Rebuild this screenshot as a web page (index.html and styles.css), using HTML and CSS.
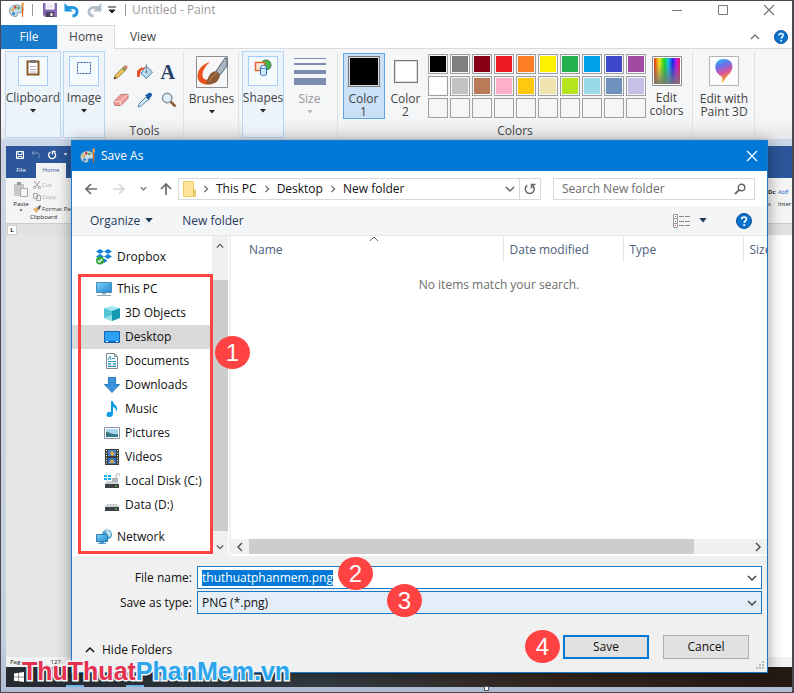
FILE: index.html
```html
<!DOCTYPE html>
<html lang="en">
<head>
<meta charset="utf-8">
<title>Untitled - Paint</title>
<link rel="stylesheet" href="styles.css">
</head>
<body>
<svg class="defs" aria-hidden="true">
  <symbol id="palette" viewBox="0 0 16 16">
    <path d="M7.5 3C3.5 3 .5 5.6.5 8.9c0 3.1 2.6 5.6 6 5.6 1.700 0 1.800-1.300 1.600-2.200-.2-1.100.6-1.800 1.700-1.600 2 .4 4.200-.3 4.200-2.500C14 5 11.200 3 7.500 3z" fill="#c3dcea" stroke="#5f8297" stroke-width=".8"/>
    <circle cx="3.700" cy="8" r="1.400" fill="#e9a02c"/><circle cx="6.200" cy="5.400" r="1.300" fill="#d83b2c"/><circle cx="9.400" cy="6" r="1.300" fill="#4ba436"/><circle cx="4.600" cy="11.400" r="1.500" fill="#3b80cf"/>
    <path d="M12.200 1.200 14.500.3l.5 3-1 1.700h-1z" fill="#f0a24a"/><path d="M12.600 5h1.800l-.3 10h-1z" fill="#e06a1b"/>
  </symbol>
  <symbol id="down" viewBox="0 0 8 4"><path d="M1 0h6L4 3.500z" fill="currentColor"/></symbol>
  <symbol id="chev-down" viewBox="0 0 10 10"><path d="M1 3l4 4 4-4" fill="none" stroke="currentColor" stroke-width="1.500"/></symbol>
  <symbol id="chev-up" viewBox="0 0 10 10"><path d="M1 7l4-4 4 4" fill="none" stroke="currentColor" stroke-width="1.500"/></symbol>
  <symbol id="chev-right" viewBox="0 0 10 10"><path d="M3 1l4 4-4 4" fill="none" stroke="currentColor" stroke-width="1.500"/></symbol>
  <symbol id="chev-left" viewBox="0 0 10 10"><path d="M7 1L3 5l4 4" fill="none" stroke="currentColor" stroke-width="1.500"/></symbol>
  <symbol id="close" viewBox="0 0 12 12"><path d="M1 1l10 10M11 1L1 11" fill="none" stroke="currentColor" stroke-width="1.200"/></symbol>
  <symbol id="floppy" viewBox="0 0 16 16">
    <path d="M1 1h14v14H3l-2-2z" fill="#8468b4"/><path d="M3.500 1h9v6.500h-9z" fill="#fff"/><path d="M5 3h6M5 5h6" stroke="#d9d2e8"/><path d="M4 10h8v5H4z" fill="#4b4160"/><path d="M8.500 11h2v3h-2z" fill="#fff"/>
  </symbol>
  <symbol id="undo" viewBox="0 0 16 16"><path d="M2 5.500h6.500c6 0 6 8 0 8.500" fill="none" stroke="currentColor" stroke-width="3"/><path d="M.5 1v8.500H9z" fill="currentColor"/></symbol>
  <symbol id="drive" viewBox="0 0 16 16"><path d="M3 7h10l2 3H1z" fill="#cfd2d4"/><path d="M1 10h14v4H1z" fill="#3e4143"/><path d="M11 11.500h2v1h-2z" fill="#57e04b"/></symbol>
  <symbol id="help" viewBox="0 0 16 16"><circle cx="8" cy="8" r="7.500" fill="#0a72cd" stroke="#0a4f93"/><path d="M5.700 6.300c0-3 4.800-3 4.800-.2C10.500 8 8.200 7.800 8.200 10" fill="none" stroke="#fff" stroke-width="1.700"/><path d="M7.300 11.300h1.800V13H7.300z" fill="#fff"/></symbol>
  <linearGradient id="sky" x1="0" y1="0" x2="1" y2="1"><stop offset="0" stop-color="#7ed3f7"/><stop offset="1" stop-color="#1f86d0"/></linearGradient>
  <linearGradient id="hue"><stop offset="0" stop-color="#e42a1a"/><stop offset=".2" stop-color="#f4e51c"/><stop offset=".4" stop-color="#16d32b"/><stop offset=".55" stop-color="#15bfe8"/><stop offset=".72" stop-color="#2026e8"/><stop offset=".87" stop-color="#c71ae0"/><stop offset="1" stop-color="#e8184a"/></linearGradient>
  <linearGradient id="fade" x1="0" y1="0" x2="0" y2="1"><stop offset=".2" stop-color="#777" stop-opacity="0"/><stop offset="1" stop-color="#777" stop-opacity=".9"/></linearGradient>
  <linearGradient id="pin" x1="0" y1="0" x2=".3" y2="1"><stop offset="0" stop-color="#1dc8ee"/><stop offset=".35" stop-color="#6a72ee"/><stop offset=".65" stop-color="#d8519c"/><stop offset="1" stop-color="#ffb01f"/></linearGradient>
</svg>

<div class="paint">
  <header class="titlebar">
    <svg class="i16"><use href="#palette"/></svg><span class="bar"></span>
    <button aria-label="Save drawing"><svg class="i16"><use href="#floppy"/></svg></button>
    <button class="undo" aria-label="Undo"><svg class="i16"><use href="#undo"/></svg></button>
    <button class="redo" aria-label="Redo"><svg class="i16"><use href="#undo"/></svg></button>
    <button class="more" aria-label="Customize toolbar"><svg width="8" height="8" viewBox="0 0 8 8"><path d="M0 1h8M1 4h6L4 7z" fill="#222" stroke="#222" stroke-width="1"/></svg></button>
    <span class="bar"></span><span class="caption">Untitled - Paint</span>
    <span class="grow"></span>
    <div class="winbtns">
      <button aria-label="Minimize"><svg width="12" height="12"><path d="M1 6.500h10" stroke="#777"/></svg></button>
      <button aria-label="Maximize"><svg width="12" height="12"><path d="M1.500 1.500h9v9h-9z" fill="none" stroke="#777"/></svg></button>
      <button aria-label="Close Paint"><svg width="12" height="12"><use href="#close"/></svg></button>
    </div>
  </header>
  <nav class="tabs">
    <button class="tab file">File</button><button class="tab home">Home</button><button class="tab">View</button>
    <span class="grow"></span>
    <button aria-label="Collapse ribbon"><svg class="i10"><use href="#chev-up"/></svg></button>
    <button aria-label="Paint help"><svg width="14" height="14"><use href="#help"/></svg></button>
  </nav>

  <section class="ribbon">
    <button class="group boxed clip">
      <span class="pic"><svg width="20" height="20" viewBox="0 0 20 20"><path d="M4.500 3.500h11v13h-11z" fill="#fff" stroke="#8b5a2b" stroke-width="2"/><path d="M7 2h6v3H7z" fill="#777"/><path d="M7 8.500h6M7 11.500h6M7 14h6" stroke="#aab"/></svg></span>
      <span>Clipboard</span><svg class="arrow"><use href="#down"/></svg>
    </button>
    <button class="group boxed image">
      <span class="pic"><svg width="20" height="20" viewBox="0 0 20 20"><path d="M3.500 4.500h13v11h-13z" fill="#f2f9ff" stroke="#245b94" stroke-dasharray="2 1"/></svg></span>
      <span>Image</span><svg class="arrow"><use href="#down"/></svg>
    </button>
    <div class="group tools">
      <div class="toolgrid">
        <button aria-label="Pencil"><svg class="i16" viewBox="0 0 16 16"><path d="M1 15l1.500-4L11 2.500l2.500 2.500L5 13.500z" fill="#f2c45a" stroke="#7e6031" stroke-width=".8"/><path d="M10.500 3l1.600-1.600c1-.8 3.200 1.200 2.300 2.300L13 5.200z" fill="#d67a72"/><path d="M9.700 3.800l2.500 2.500" stroke="#4c8c44" stroke-width="1.300"/><path d="M1 15l.8-2.200 1.500 1.400z" fill="#222"/></svg></button>
        <button aria-label="Fill"><svg class="i16" viewBox="0 0 16 16"><path d="M9 2l6.500 6-6 6.500-5.500-5z" fill="#b9def2" stroke="#4c7da3"/><path d="M9.500 0v8" stroke="#89a" /><circle cx="9.500" cy="8" r="1" fill="#567"/><path d="M0 13V7l4-3.500 5 .5-5 2.500L2.500 13z" fill="#e5502c"/></svg></button>
        <button aria-label="Text" class="letter">A</button>
        <button aria-label="Eraser"><svg class="i16" viewBox="0 0 16 16"><path d="M.8 9.500L8 2.500l7-.2v4L8 13.500H2z" fill="#ef9d9a" stroke="#b55f60" stroke-width=".8"/><path d="M.8 9.500h6.200l8-7M7 9.500l.8 4" stroke="#fadada" fill="none"/></svg></button>
        <button aria-label="Pick color"><svg class="i16" viewBox="0 0 16 16"><path d="M9 5l2.500 2.500L4 14l-3 1 1-3z" fill="#d5edf8" stroke="#4a7497" stroke-width=".9"/><path d="M8 3l1.500-.5L12 .8c2-.8 4 1.400 2.600 3.200L12.300 7l-.2 1.800z" fill="#1d5fa4"/></svg></button>
        <button aria-label="Magnifier"><svg class="i16" viewBox="0 0 16 16"><path d="M9.500 9.500l5 5" stroke="#8a5c3b" stroke-width="2.500"/><circle cx="6.200" cy="6" r="4.700" fill="#d9f0fb" stroke="#8c9299" stroke-width="1.500"/></svg></button>
      </div>
      <span class="glabel">Tools</span>
    </div>
    <button class="group brushes">
      <svg width="32" height="32" viewBox="0 0 32 32"><path d="M.5.5h31v31H.5z" fill="#f7f7f7" stroke="#8e8e8e"/><path d="M14 6C6 8 1.500 14 1.500 20c0 7 7 10 15 8l-2-5c-6 2-8-1-8-4 0-5 4-10 7.500-13z" fill="#ea5320"/><path d="M10 28c2-7 4-13 11-13l3 4c-1 7-6 10-14 9z" fill="#8b5a32"/><path d="M13 26c2-4 4-7 8-9" stroke="#c08a52" fill="none"/><path d="M20 15L29 2h2v8l-7 9z" fill="#a9b6c2" stroke="#536573"/></svg>
      <span>Brushes</span><svg class="arrow"><use href="#down"/></svg>
    </button>
    <button class="group boxed shapes">
      <span class="pic"><svg width="20" height="20" viewBox="0 0 20 20"><circle cx="13" cy="7" r="5" fill="#49b34a" stroke="#2c7c34"/><path d="M2.500 4.500h9v8h-9z" fill="#fde9dc" stroke="#e3672e" stroke-width="1.500"/><path d="M7.500 9v7c0 2 6 2 6 0V9" fill="#cfe7fb" stroke="#2a72bd"/><ellipse cx="10.500" cy="9" rx="3" ry="1.500" fill="#fff" stroke="#2a72bd"/></svg></span>
      <span>Shapes</span><svg class="arrow"><use href="#down"/></svg>
    </button>
    <button class="group size" disabled>
      <svg width="32" height="32" viewBox="0 0 32 32"><path d="M0 2h32v1H0zM0 7h32v2H0zM0 14h32v4H0zM0 22h32v7H0z" fill="#7b8eb0"/></svg>
      <span>Size</span><svg class="arrow"><use href="#down"/></svg>
    </button>
    <div class="group colors">
      <div class="colorrow">
        <button class="cbtn active"><span class="chip black"></span><span>Color<br>1</span></button>
        <button class="cbtn second"><span class="chip white"></span><span>Color<br>2</span></button>
        <div class="swatches">
          <i class="c1"></i><i class="c2"></i><i class="c3"></i><i class="c4"></i><i class="c5"></i><i class="c6"></i><i class="c7"></i><i class="c8"></i><i class="c9"></i><i class="c10"></i>
          <i class="c11"></i><i class="c12"></i><i class="c13"></i><i class="c14"></i><i class="c15"></i><i class="c16"></i><i class="c17"></i><i class="c18"></i><i class="c19"></i><i class="c20"></i>
          <i></i><i></i><i></i><i></i><i></i><i></i><i></i><i></i><i></i><i></i>
        </div>
        <button class="cbtn edit"><svg width="30" height="30" viewBox="0 0 30 30"><path d="M.5.5h29v29H.5z" fill="#fff" stroke="#8e8e8e"/><path d="M2 2h26v26H2z" fill="url(#hue)"/><path d="M2 2h26v26H2z" fill="url(#fade)"/></svg><span>Edit<br>colors</span></button>
      </div>
      <span class="glabel">Colors</span>
    </div>
    <button class="group p3d">
      <svg width="30" height="30" viewBox="0 0 30 30"><path d="M.5.500h29v29H.5z" fill="#fdfdfd" stroke="#b5b5b5"/><path d="M15 3c11 0 10 12 4 16l-6 8c0-4 1-5-1-7-8-4-8-17 3-17z" fill="url(#pin)"/></svg>
      <span>Edit with<br>Paint 3D</span>
    </button>
  </section>

  <main class="workspace">
    <div class="word">
      <div class="whead">
        <div class="wquick"><svg class="i10" viewBox="0 0 10 10"><path d="M1.500 1.500h7v7h-7zM3 1.500v3h4v-3M3 8.500v-2h4v2" fill="none" stroke="#fff"/></svg>
          <svg class="i10 dim" viewBox="0 0 10 10"><path d="M1 3h5c4 0 3 4 1 5M3 1L1 3l2 2" fill="none" stroke="#fff"/></svg>
          <svg class="i10" viewBox="0 0 10 10"><path d="M3.500 2a3.500 3.500 0 1 0 4 .5M5.500 4.500v-3h3" fill="none" stroke="#fff" stroke-width="1.300"/></svg>
          <svg class="arrow" width="5" height="3"><use href="#down"/></svg></div>
        <div class="wtabs"><span>File</span><span class="on">Home</span></div>
      </div>
      <div class="wribbon">
        <div class="wclip">
          <span class="paste"><svg width="16" height="18" viewBox="0 0 16 18"><path d="M1 3h10v12H1z" fill="#c8c8c8"/><path d="M4 1h4v3H4z" fill="#999"/><path d="M7.500 7.500h7v8h-7z" fill="#f5f5f5" stroke="#aaa"/></svg>Paste<svg width="4" height="3"><use href="#down"/></svg></span>
          <span class="wcmds"><span><svg class="i8" viewBox="0 0 8 8"><path d="M1 0l5 6M7 0L2 6" stroke="#999"/><circle cx="1.500" cy="6.500" r="1" fill="none" stroke="#999"/><circle cx="6.500" cy="6.500" r="1" fill="none" stroke="#999"/></svg>Cut</span><span><svg class="i8" viewBox="0 0 8 8"><path d="M.5.5h4v5h-4zM3.500 2.500h4v5h-4z" fill="#eee" stroke="#aaa"/></svg>Copy</span><span class="fmt"><svg class="i8" viewBox="0 0 8 8"><path d="M0 4l3-2 3 3-3 3z" fill="#e8b46a"/><path d="M4 3l3-3 1 1-2 4z" fill="#555"/></svg>Format Pai</span></span>
        </div>
        <span class="wlabel">Clipboard</span>
        <div class="wstyles"><b>Dc</b><em>AaB</em><span>s</span><span>Inter</span></div>
      </div>
      <div class="wdoc"><span class="ruler">L</span><span class="grow"></span><span class="page"></span></div>
      <div class="wstatus"><span>Page</span><span>127-</span></div>
      <div class="taskbar"><svg width="10" height="10" viewBox="0 0 10 10"><path d="M0 1.500l4.500-.7v4H0zM5 .7L10 0v4.800H5zM0 5.300h4.500v4L0 8.700zM5 5.300h5V10l-5-.7z" fill="#fff"/></svg><i class="off"></i><i></i><i class="off"></i><i></i><svg width="12" height="12"><use href="#palette"/></svg></div>
    </div>
    <span class="handle"></span>

    <div class="dialog" role="dialog" aria-label="Save As">
      <div class="dtitle"><svg class="i16"><use href="#palette"/></svg><span>Save As</span><span class="grow"></span><button aria-label="Close"><svg width="12" height="12"><use href="#close"/></svg></button></div>
      <div class="dnav">
        <button aria-label="Back"><svg width="14" height="12" viewBox="0 0 14 12"><path d="M13 6H2M7 1L2 6l5 5" fill="none" stroke="#6b6b6b" stroke-width="1.700"/></svg></button>
        <button aria-label="Forward"><svg width="14" height="12" viewBox="0 0 14 12"><path d="M1 6h11M7 1l5 5-5 5" fill="none" stroke="#d6d6d6" stroke-width="1.500"/></svg></button>
        <button class="recent" aria-label="Recent locations"><svg width="7" height="7"><use href="#chev-down"/></svg></button>
        <button aria-label="Up"><svg width="12" height="14" viewBox="0 0 12 14"><path d="M6 13V2M1 7l5-5 5 5" fill="none" stroke="#6b6b6b" stroke-width="1.700"/></svg></button>
        <div class="address">
          <svg width="13" height="16" viewBox="0 0 13 16"><path d="M.5.500h10v15H.5z" fill="#ffe396" stroke="#edca62"/><path d="M10.500 9h2v6.500h-2z" fill="#f6d36f" stroke="#d9b24e" stroke-width=".6"/></svg>
          <svg class="i8"><use href="#chev-right"/></svg><a href="#pc">This PC</a>
          <svg class="i8"><use href="#chev-right"/></svg><a href="#desktop">Desktop</a>
          <svg class="i8"><use href="#chev-right"/></svg><a href="#folder">New folder</a>
          <span class="grow"></span><button aria-label="Previous locations"><svg class="i10"><use href="#chev-down"/></svg></button>
          <button class="refresh" aria-label="Refresh"><svg width="12" height="12" viewBox="0 0 12 12"><path d="M3.300 2.300a4.500 4.500 0 1 0 5 0M7.500 5.500v-4h4" fill="none" stroke="#666" stroke-width="1.500"/></svg></button>
        </div>
        <label class="search"><input type="text" placeholder="Search New folder" aria-label="Search New folder"><svg width="12" height="12" viewBox="0 0 12 12"><circle cx="7.500" cy="4.500" r="3.300" fill="none" stroke="#666" stroke-width="1.400"/><path d="M5 7L1 11" stroke="#666" stroke-width="1.800"/></svg></label>
      </div>
      <div class="dtools"><button>Organize <svg class="arrow big"><use href="#down"/></svg></button><button>New folder</button><span class="grow"></span>
        <button aria-label="Change view"><svg width="17" height="14" viewBox="0 0 17 14"><path d="M.5.500h4v13h-4zM.5 4.500h4M.5 9.500h4" fill="#fff" stroke="#999"/><path d="M2 2h1v1H2z" fill="#367"/><path d="M2 7h1v1H2z" fill="#36a"/><path d="M2 11h1v1H2z" fill="#c33"/><path d="M6 2.500h11M6 7.500h11M6 11.500h11" stroke="#888" stroke-dasharray="5 1"/></svg><svg class="arrow big"><use href="#down"/></svg></button>
        <button class="dhelp" aria-label="Help"><svg class="i16"><use href="#help"/></svg></button></div>
      <div class="dbody">
        <aside class="side">
          <ul class="tree">
            <li><a href="#dropbox"><svg class="i16" viewBox="0 0 16 16"><path d="M4 0l4 2.500L4 5 0 2.500zM12 0l4 2.500L12 5 8 2.500zM4 5l4 2.500L4 10 0 7.500zM12 5l4 2.500-4 2.500-4-2.500zM8 9.500l3.500 2L8 14l-3-2z" fill="#1081de"/><circle cx="4" cy="11.500" r="4" fill="#35a53b"/><path d="M2 11.500l1.500 1.600L6 10" stroke="#fff" stroke-width="1.300" fill="none"/></svg>Dropbox</a></li>
            <li class="gap"><a href="#pc"><svg class="i16" viewBox="0 0 16 16"><path d="M.5 1.500h15v10H.5z" fill="url(#sky)" stroke="#4a8db8"/><path d="M6 12h4v1.500H6z" fill="#9ab"/><path d="M1 14.500h14" stroke="#93a4ae"/></svg>This PC</a></li>
            <li class="sub"><a href="#objects"><svg class="i16" viewBox="0 0 16 16"><path d="M0 3l8-2 8 2-8 3z" fill="#a5e7ef"/><path d="M0 3l8 3v10l-8-3z" fill="#53c6d6"/><path d="M16 3L8 6v10l8-3z" fill="#1599b0"/><path d="M0 13l8-3v6z" fill="#98dfe8"/></svg>3D Objects</a></li>
            <li class="sub on"><a href="#desktop"><svg class="i16" viewBox="0 0 16 16"><path d="M.5 2.500h15v11H.5z" fill="#2aa2f4" stroke="#1263b0"/><path d="M1 12.500h14" stroke="#1060b5"/><path d="M2 12h2v1H2zM12 12h2v1h-2z" fill="#fff"/></svg>Desktop</a></li>
            <li class="sub"><a href="#documents"><svg class="i16" viewBox="0 0 16 16"><path d="M2.500.5h8l3 3v12h-11z" fill="#fff" stroke="#7b8b96"/><path d="M10.500.5v3h3" fill="none" stroke="#7b8b96"/><path d="M4 7l2-4 1 4M8 5.500h3M4 8.500h8M4 10.500h3M9 10.500h3M4 13.500h8M9 12h3M4 12h3" fill="none" stroke="#3796c7"/></svg>Documents</a></li>
            <li class="sub"><a href="#downloads"><svg class="i16" viewBox="0 0 16 16"><path d="M4.500.5h7v7h4L8 15.500.5 7.500h4z" fill="#3a91dc" stroke="#2977bb"/></svg>Downloads</a></li>
            <li class="sub"><a href="#music"><svg class="i16" viewBox="0 0 16 16"><path d="M7 0h2c0 4 5 4 4 9l-1 2c0-4-1-4-3-5v7c0 4-7 4-6.500.5C3 11 5 10.500 7 11z" fill="#129be8"/></svg>Music</a></li>
            <li class="sub"><a href="#pictures"><svg class="i16" viewBox="0 0 16 16"><path d="M.5 2.500h15v11H.5z" fill="#fff" stroke="#8b949a"/><path d="M2 4h12v8H2z" fill="#a8d4ef"/><path d="M2 7c4 0 5 3 12 2v3H2z" fill="#3d7779"/><path d="M2 11h12v1H2z" fill="#2877ae"/></svg>Pictures</a></li>
            <li class="sub"><a href="#videos"><svg class="i16" viewBox="0 0 16 16"><path d="M1 0h14v16H1z" fill="#3b3b3b"/><path d="M4 1h8v6H4z" fill="#4a83ce"/><path d="M4 9h8v6H4z" fill="#3774c6"/><path d="M6 4l2-2 3 3-3 2zM5 14l3-4 3 4z" fill="#e7ad31"/><path d="M2.500 1v15M13.500 1v15" stroke="#fff" stroke-dasharray="1 1.500"/></svg>Videos</a></li>
            <li class="sub"><a href="#c"><svg class="i16" viewBox="0 0 16 16"><use href="#drive" y="1"/><path d="M0 2h3v2H0zM4 2h3v2H4zM0 5h3v2H0zM4 5h3v2H4z" fill="#13b3f0"/><path d="M8 5h6v4H8z" fill="#aeb6bb"/><path d="M12 5V3c0-3 4-3 4 0v1" fill="none" stroke="#aaa"/></svg>Local Disk (C:)</a></li>
            <li class="sub"><a href="#d"><svg class="i16"><use href="#drive"/></svg>Data (D:)</a></li>
            <li class="gap"><a href="#network"><svg class="i16" viewBox="0 0 16 16"><circle cx="11" cy="5.500" r="5" fill="#4e9dc9"/><path d="M8 2l3 1-1 3 4 2 1-4-3-3z" fill="#c6e8f5"/><path d="M.5 5.500h11v7H.5z" fill="url(#sky)" stroke="#2e7bac"/><path d="M4 13h4v1H4zM2 14h8v1H2z" fill="#4b9bd0"/></svg>Network</a></li>
          </ul>
          <div class="vscroll"><svg class="i8"><use href="#chev-up"/></svg><span class="vthumb"></span><svg class="i8"><use href="#chev-down"/></svg></div>
          <span class="mark"></span><span class="badge b1">1</span>
        </aside>
        <div class="list">
          <table><thead><tr><th class="name">Name<svg class="i10 sort" viewBox="0 0 10 10"><path d="M1 7l4-4 4 4" fill="none" stroke="#666"/></svg></th><th class="col">Date modified</th><th class="col">Type</th><th class="last">Size</th></tr></thead>
          <tbody><tr><td colspan="4">No items match your search.</td></tr></tbody></table>
          <div class="hscroll"><svg class="i10"><use href="#chev-left"/></svg><span class="hthumb"></span><span class="grow"></span><svg class="i10"><use href="#chev-right"/></svg></div>
        </div>
      </div>
      <form class="dfoot">
        <div class="field"><label for="fname">File name:</label><div class="combo"><input id="fname" type="text" value="thuthuatphanmem.png"><span class="grow"></span><svg class="i10"><use href="#chev-down"/></svg></div><span class="badge b2">2</span></div>
        <div class="field"><label for="ftype">Save as type:</label><div class="combo type"><select id="ftype"><option>PNG (*.png)</option></select><svg class="i10"><use href="#chev-down"/></svg></div><span class="badge b3">3</span></div>
        <div class="actions"><button type="button" class="hide"><svg class="i10"><use href="#chev-up"/></svg>Hide Folders</button><span class="grow"></span>
          <span class="savewrap"><span class="badge b4">4</span><button type="button" class="btn save">Save</button></span><button type="button" class="btn">Cancel</button></div>
        <svg class="grip" width="8" height="8" viewBox="0 0 8 8"><path d="M6 0h2v2H6zM3 3h2v2H3zM6 3h2v2H6zM0 6h2v2H0zM3 6h2v2H3zM6 6h2v2H6z" fill="#bbb"/></svg>
      </form>
    </div>
    <div class="watermark"><span>ThuThuat</span><span class="cyan">PhanMem.vn</span></div>
  </main>
</div>
</body>
</html>
```
FILE: styles.css
```css
* { box-sizing: border-box; }
body { margin: 0; font: 12px/16px "Open Sans", "Noto Sans", sans-serif; color: #222; }
button, input, select { font: inherit; color: inherit; }
button { border: 0; padding: 0; background: none; display: flex; align-items: center; }
a { color: inherit; text-decoration: none; }
svg { display: block; flex: none; }
.defs { position: absolute; width: 0; height: 0; }
.grow { flex: 1; }
.i16 { width: 16px; height: 16px; }
.i10 { width: 10px; height: 10px; }
.i8 { width: 8px; height: 8px; }
.arrow { width: 8px; height: 4px; }
.arrow.big { width: 10px; height: 5px; }

.paint { min-height: 100vh; display: flex; flex-direction: column; border: 1px solid #4a484c; border-right-width: 2px; background: #fff; overflow: hidden; }
.titlebar { display: flex; align-items: center; height: 24px; padding: 0 17px 6px 8px; gap: 6px; }
.titlebar .bar { width: 1px; height: 12px; background: #999; margin: 0 3px 0 1px; }
.undo { color: #2397e0; }
.redo { color: #b4bfca; transform: scaleX(-1); }
.more { margin: 0 3px 0 0; }
.titlebar .more + .bar { margin: 0; }
.caption { color: #999; }
.winbtns { display: flex; gap: 34px; color: #777; }
.tabs { display: flex; align-items: center; gap: 14px; height: 24px; padding-right: 4px; color: #777; border-bottom: 1px solid #dadbdc; }
.tab { height: 24px; justify-content: center; width: 56px; color: #444; }
.tab.file { background: #1979ca; color: #fff; margin-right: -14px; }
.tab.home { width: 58px; background: #f5f6f7; border: 1px solid #dadbdc; border-bottom: 0; margin-right: -14px; }

.ribbon { display: flex; height: 90px; padding: 2px 0 1px 4px; background: linear-gradient(#f5f6f7 75%, #e6e7e8); color: #444; }
.group { display: flex; flex-direction: column; align-items: center; height: 87px; padding-top: 4px; border: 1px solid transparent; line-height: 13px; }
.group > svg:first-child { margin-bottom: 6px; }
.pic { display: grid; place-items: center; width: 30px; height: 30px; padding-bottom: 6px; border: 1px solid #a4cdf8; background: #f5faff; margin-bottom: 5px; }
.group > .arrow { margin-top: 5px; color: #222; }
.boxed { border-color: #b5d6f5; background: #ecf3f9; }
.clip { width: 56px; }
.image { width: 42px; margin-left: 2px; }
.tools { width: 79px; border-right-color: #dfe0e1; }
.toolgrid { display: grid; grid-template-columns: repeat(3, 16px); gap: 12px 8px; padding-top: 8px; }
.letter { font: bold 20px/16px "Liberation Serif", serif; color: #23406a; height: 16px; }
.glabel { margin-top: auto; line-height: 12px; }
.brushes { width: 55px; border-right-color: #dfe0e1; }
.brushes > svg:first-child, .size > svg:first-child { margin-bottom: 4px; }
.shapes { width: 42px; margin-left: 3px; }
.size { width: 51px; margin-right: 2px; color: #999; border-right-color: transparent; }
.group.size > .arrow { color: #bbb; }
.colors { width: 356px; padding-top: 1px; border-right-color: #dfe0e1; border-left-color: #dfe0e1; }
.colorrow { display: flex; }
.cbtn { flex-direction: column; width: 42px; height: 66px; border: 1px solid transparent; padding-top: 2px; }
.cbtn.active { background: #c9e0f7; border-color: #62a2e4; }
.chip { width: 32px; height: 32px; border: 1px solid #777; margin-bottom: 5px; box-shadow: inset 0 0 0 1px #ddd; }
.black { background: #000; }
.white { background: #fff; width: 24px; height: 24px; margin: 4px 0 9px; }
.swatches { display: grid; grid-template-columns: repeat(10, 20px); grid-auto-rows: 20px; gap: 2px; padding: 1px 0 0 1px; }
.swatches i { border: 1px solid #a0a0a0; padding: 1px; background-clip: content-box; }
.edit { width: 42px; padding-top: 2px; }
.edit svg { margin-bottom: 5px; }
.c1 { background-color: #000; } .c2 { background-color: #7f7f7f; } .c3 { background-color: #880015; } .c4 { background-color: #ed1c24; } .c5 { background-color: #ff7f27; }
.c6 { background-color: #fff200; } .c7 { background-color: #22b14c; } .c8 { background-color: #00a2e8; } .c9 { background-color: #3f48cc; } .c10 { background-color: #a349a4; }
.c11 { background-color: #fff; } .c12 { background-color: #c3c3c3; } .c13 { background-color: #b97a57; } .c14 { background-color: #ffaec9; } .c15 { background-color: #ffc90e; }
.c16 { background-color: #efe4b0; } .c17 { background-color: #b5e61d; } .c18 { background-color: #99d9ea; } .c19 { background-color: #7092be; } .c20 { background-color: #c8bfe7; }
.p3d { width: 62px; border-right-color: #dfe0e1; }

.workspace { position: relative; flex: 1; display: flex; flex-direction: column; padding: 7px 0 5px 5px; background: linear-gradient(#cdd6e6, #c4cfe0 90%, #aebdd2); }
.word { flex: 1; display: flex; flex-direction: column; background: #e5e5e5; font-size: 6px; line-height: 8px; overflow: hidden; }
.whead { height: 32px; background: #2b579a; color: #fff; }
.wquick { display: flex; align-items: center; gap: 6px; height: 17px; padding-left: 9px; }
.dim { opacity: .4; }
.wquick .arrow { width: 5px; height: 3px; }
.wtabs { display: flex; line-height: 15px; }
.wtabs span { width: 30px; text-align: center; }
.wtabs .on { background: #f4f4f4; color: #2b579a; }
.wribbon { position: relative; height: 46px; background: #f4f4f4; border-bottom: 1px solid #ccc; }
.wclip { display: flex; gap: 4px; padding: 3px 0 0 7px; }
.paste { display: flex; flex-direction: column; align-items: center; gap: 1px; }
.wcmds { display: flex; flex-direction: column; gap: 4px; color: #aaa; }
.wcmds > span { display: flex; gap: 1px; white-space: nowrap; }
.wcmds .fmt { color: #333; }
.wlabel { display: block; padding-left: 24px; }
.wstyles { position: absolute; right: 0; top: 10px; display: grid; grid-template-columns: 10px 14px; row-gap: 4px; }
.wstyles em { color: #3572c8; }
.wdoc { flex: 1; display: flex; border-top: 12px solid #e1e1e1; margin-top: -1px; }
.ruler { width: 10px; height: 10px; margin: -10px 0 0 1px; background: #fff; border: 1px solid #ccc; text-align: center; font-weight: bold; }
.page { width: 60px; background: #fff; }
.wstatus { display: flex; gap: 27px; height: 10px; padding: 1px 4px; background: #f2f2f2; }
.taskbar { display: flex; align-items: center; gap: 12px; height: 20px; padding-left: 8px; background: linear-gradient(90deg, #242a2e, #343b43 40%, #35271f 70%, #251915); }
.taskbar i { width: 18px; height: 20px; border-bottom: 2px solid #76b9ed; }
.taskbar .off { border: 0; }
.handle { position: absolute; left: 483px; bottom: 1px; width: 5px; height: 5px; background: #fff; border: 1px solid #555; }

.dialog { position: absolute; left: 70px; right: 24px; top: 1px; border: 1px solid #1979ca; background: #fff; box-shadow: 0 2px 14px rgba(0,0,0,.4); color: #111; }
.dtitle { display: flex; align-items: center; gap: 5px; height: 30px; padding: 0 9px 0 8px; background: #0078d7; color: #fff; }
.dnav { display: flex; align-items: center; height: 35px; padding: 0 12px; color: #666; }
.dnav > button { margin-right: 14px; }
.dnav > .recent { margin: 0 13px 0 0; }
.dnav > button + .address { margin-left: -8px; }
.address { display: flex; align-items: center; flex: 1; gap: 6px; height: 22px; padding-left: 4px; border: 1px solid #d9d9d9; }
.address a { color: #111; }
.refresh { width: 21px; height: 20px; justify-content: center; border-left: 1px solid #d9d9d9; margin-left: -2px; }
.search { display: flex; align-items: center; width: 202px; height: 22px; margin-left: 12px; padding: 0 8px; border: 1px solid #d9d9d9; }
.search input { flex: 1; min-width: 0; border: 0; padding: 0; background: none; outline: 0; }
.search input::placeholder { color: #6d6d6d; opacity: 1; }
.dtools { display: flex; align-items: center; height: 30px; padding: 0 15px 0 18px; gap: 28px; background: #f4f5f7; border-bottom: 1px solid #e5e8ec; color: #1e395b; }
.dtools button { gap: 4px; }
.dtools svg + .arrow { margin-left: 4px; }
.dbody { display: flex; height: 320px; }
.side { position: relative; display: flex; width: 159px; border-right: 2px solid #f0f0f0; }
.tree { list-style: none; margin: 0; padding: 9px 0 0; flex: 1; min-width: 0; }
.tree li { padding-left: 24px; }
.tree .sub { padding-left: 32px; }
.tree a { display: flex; align-items: center; gap: 5px; height: 24px; white-space: nowrap; }
.tree .on { background: #d9d9d9; margin-right: 2px; }
.tree .gap { margin-top: 8px; }
.vscroll { display: flex; flex-direction: column; align-items: center; width: 16px; padding: 6px 0 5px; background: #f0f0f0; color: #555; margin-right: 1px; }
.vthumb { width: 16px; flex: 1; margin: 30px 0 12px; background: #cdcdcd; }
.mark { position: absolute; left: 6px; top: 38px; width: 135px; height: 280px; border: 3px solid #ff4343; }
.badge { position: absolute; display: grid; place-items: center; width: 35px; height: 33px; border-radius: 50%; background: #ff4343; color: #fff; font: 24px/24px "Liberation Sans", sans-serif; z-index: 1; }
.b1 { left: 143px; top: 100px; }
.b2 { left: 261px; top: -9px; }
.b3 { left: 310px; top: -7px; }
.b4 { right: 89px; top: -5px; }
.list { flex: 1; min-width: 0; display: flex; flex-direction: column; justify-content: space-between; overflow: hidden; }
.list table { width: 100%; table-layout: fixed; border-collapse: collapse; }
.list th { position: relative; height: 26px; padding: 2px 0 0 6px; text-align: left; font-weight: normal; color: #4c607a; border-right: 1px solid #e5e5e5; }
.list th.name { padding-left: 18px; }
.col { width: 120px; }
.list th.last { width: 24px; border: 0; overflow: hidden; }
.sort { position: absolute; left: 138px; top: -2px; }
.list td { padding: 15px 0 0; text-align: center; color: #6d6d6d; }
.hscroll { display: flex; align-items: center; height: 15px; padding: 0 4px; background: #f0f0f0; margin-bottom: 2px; color: #555; }
.hthumb { width: 445px; height: 15px; margin-left: 4px; background: #cdcdcd; }

.dfoot { position: relative; padding: 10px 5px 13px; background: #f0f0f0; }
.field { position: relative; display: flex; align-items: center; margin-bottom: 2px; }
.field label { width: 115px; text-align: right; margin-right: 5px; }
.combo { display: flex; align-items: center; flex: 1; height: 23px; padding: 0 4px; border: 1px solid #1979ca; background: #fff; color: #444; }
.combo input { field-sizing: content; border: 0; padding: 0; height: 16px; background: #0078d7; color: #fff; outline: 0; }
.combo.type { position: relative; background: #e4eef8; }
.combo select { flex: 1; appearance: none; border: 0; padding: 0; background: none; color: #111; outline: 0; }
.actions { display: flex; align-items: center; gap: 14px; margin: 21px 13px 0 8px; }
.hide { gap: 7px; margin-top: 6px; }
.savewrap { position: relative; }
.btn { width: 86px; height: 24px; justify-content: center; background: #e1e1e1; border: 1px solid #adadad; }
.btn.save { border: 2px solid #0078d7; }
.grip { position: absolute; right: 3px; bottom: 3px; }
.watermark { position: absolute; left: 21px; bottom: 3px; font: bold 25px/36px "Liberation Sans", sans-serif; color: #e5304e; -webkit-text-stroke: 3px #eef4f8; paint-order: stroke fill; white-space: nowrap; }
.cyan { color: #2ba5ec; }
```
